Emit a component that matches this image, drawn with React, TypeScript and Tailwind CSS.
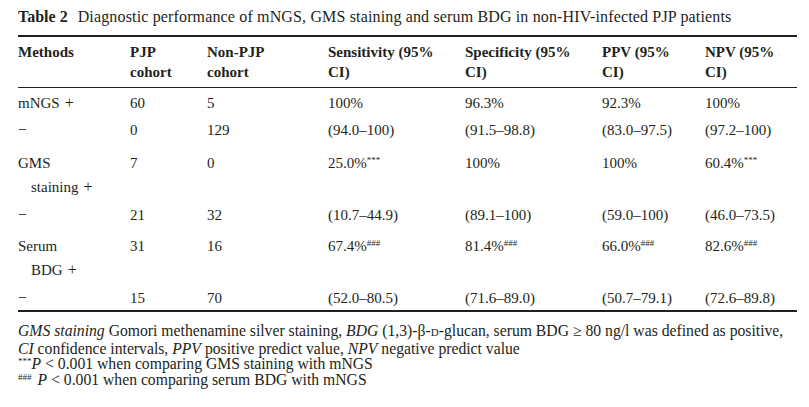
import React from "react";

const cols = "grid grid-cols-[112px_77px_121px_137px_137px_103px_92px]";

type Row = { pt: string; cells: React.ReactNode[] };

const Sup = ({ children }: { children: React.ReactNode }) => (
  <sup className="text-[9px] relative top-[1px] align-super leading-none">{children}</sup>
);

const Plus = () => <span className="ml-[5px] text-[16px]">+</span>;
const Minus = () => <span className="text-[16px]">−</span>;

const rows: Row[] = [
  {
    pt: "pt-[3px]",
    cells: [
      <>
        mNGS
        <Plus />
      </>,
      "60",
      "5",
      "100%",
      "96.3%",
      "92.3%",
      "100%",
    ],
  },
  { pt: "pt-[3px]", cells: [<Minus />, "0", "129", "(94.0–100)", "(91.5–98.8)", "(83.0–97.5)", "(97.2–100)"] },
  {
    pt: "pt-[9px]",
    cells: [
      <>
        GMS
        <br />
        <span className="pl-[13px]">
          staining
          <Plus />
        </span>
      </>,
      "7",
      "0",
      <>
        25.0%<Sup>***</Sup>
      </>,
      "100%",
      "100%",
      <>
        60.4%<Sup>***</Sup>
      </>,
    ],
  },
  { pt: "pt-[4px]", cells: [<Minus />, "21", "32", "(10.7–44.9)", "(89.1–100)", "(59.0–100)", "(46.0–73.5)"] },
  {
    pt: "pt-[7px]",
    cells: [
      <>
        Serum
        <br />
        <span className="pl-[13px]">
          BDG
          <Plus />
        </span>
      </>,
      "31",
      "16",
      <>
        67.4%<Sup>###</Sup>
      </>,
      <>
        81.4%<Sup>###</Sup>
      </>,
      <>
        66.0%<Sup>###</Sup>
      </>,
      <>
        82.6%<Sup>###</Sup>
      </>,
    ],
  },
  { pt: "pt-[4px]", cells: [<Minus />, "15", "70", "(52.0–80.5)", "(71.6–89.0)", "(50.7–79.1)", "(72.6–89.8)"] },
];

const headers: React.ReactNode[] = [
  "Methods",
  <>
    PJP
    <br />
    cohort
  </>,
  <>
    Non-PJP
    <br />
    cohort
  </>,
  <>
    Sensitivity (95%
    <br />
    CI)
  </>,
  <>
    Specificity (95%
    <br />
    CI)
  </>,
  <>
    PPV (95%
    <br />
    CI)
  </>,
  <>
    NPV (95%
    <br />
    CI)
  </>,
];

export default function App() {
  return (
    <div className="w-[809px] h-[407px] bg-white text-[#231f20] font-['Liberation_Serif',serif] overflow-hidden">
      <div className="ml-[18px] w-[779px]">
        <div className="pt-[7px] text-[16px] leading-[20px] whitespace-nowrap">
          <span className="font-bold">Table 2</span>
          <span className="ml-[10px] tracking-[0.15px]">
            Diagnostic performance of mNGS, GMS staining and serum BDG in non-HIV-infected PJP patients
          </span>
        </div>
        <div className="mt-[8px] h-[2px] bg-[#231f20]" />
        <div className={`${cols} pt-[5px] pb-[5px] text-[15px] leading-[20px] font-bold`}>
          {headers.map((h, i) => (
            <div key={i}>{h}</div>
          ))}
        </div>
        <div className="h-px bg-[#231f20]" />
        {rows.map((r, i) => (
          <div key={i} className={`${cols} ${r.pt} text-[15px] leading-[24px]`}>
            {r.cells.map((c, j) => (
              <div key={j} className="whitespace-nowrap">
                {c}
              </div>
            ))}
          </div>
        ))}
        <div className="h-[2px] bg-[#231f20]" />
        <div className="pt-[11px] text-[15.7px] leading-[15.6px]">
          <div className="whitespace-nowrap">
            <i>GMS staining</i> Gomori methenamine silver staining, <i>BDG</i> (1,3)-β-
            <span className="text-[11px]">D</span>-glucan, serum BDG ≥ 80 ng/l was defined as positive,
          </div>
          <div className="whitespace-nowrap">
            <i>CI</i> confidence intervals, <i>PPV</i> positive predict value, <i>NPV</i> negative predict value
          </div>
          <div className="whitespace-nowrap">
            <Sup>***</Sup>
            <i>P</i> &lt; 0.001 when comparing GMS staining with mNGS
          </div>
          <div className="whitespace-nowrap">
            <Sup>###</Sup>
            <span className="ml-[6px]">
              <i>P</i> &lt; 0.001 when comparing serum BDG with mNGS
            </span>
          </div>
        </div>
      </div>
    </div>
  );
}
